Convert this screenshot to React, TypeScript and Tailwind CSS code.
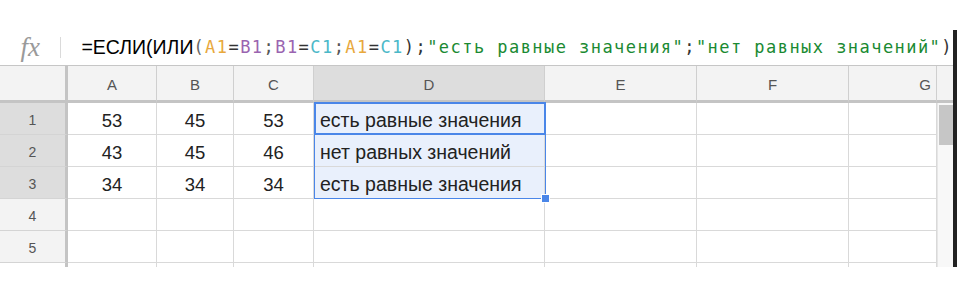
import React from "react";

const cols = [
  { k: "A", w: 89 },
  { k: "B", w: 77 },
  { k: "C", w: 80 },
  { k: "D", w: 231 },
  { k: "E", w: 152 },
  { k: "F", w: 152 },
  { k: "G", w: 88 },
];

const data: (string | number)[][] = [
  [53, 45, 53, "есть равные значения"],
  [43, 45, 46, "нет равных значений"],
  [34, 34, 34, "есть равные значения"],
  [],
  [],
];

const sans = { fontFamily: '"Liberation Sans", Arial, sans-serif' };
const mono = { fontFamily: '"DejaVu Sans Mono", monospace' };

export default function App() {
  return (
    <div className="w-[957px] h-[300px] bg-white flex overflow-hidden" style={sans}>
      <div className="w-[953px] flex flex-col">
        {/* formula bar */}
        <div className="h-[66px] flex items-start pt-[37px] border-b border-[#c6c6c6]">
          <div className="w-[68px] h-[21px] flex items-center justify-center border-r border-[#dadada]">
            <span
              className="text-[27px] italic text-[#9a9a9a] leading-none"
              style={{ fontFamily: '"Liberation Serif", serif' }}
            >
              fx
            </span>
          </div>
          <div className="pl-[20px] h-[21px] flex items-center whitespace-nowrap">
            <span className="text-[19.5px] text-black" style={sans}>=ЕСЛИ(ИЛИ</span>
            <span className="text-[17px] tracking-[1.45px]" style={mono}>
              <span className="text-[#666]">(</span>
              <span className="text-[#e8a83c]">A1</span>
              <span className="text-[#333]">=</span>
              <span className="text-[#9a64b0]">B1</span>
              <span className="text-[#555]">;</span>
              <span className="text-[#9a64b0]">B1</span>
              <span className="text-[#333]">=</span>
              <span className="text-[#4bb8c8]">C1</span>
              <span className="text-[#555]">;</span>
              <span className="text-[#e8a83c]">A1</span>
              <span className="text-[#333]">=</span>
              <span className="text-[#4bb8c8]">C1</span>
              <span className="text-[#333]">);</span>
              <span className="text-[#1a8a32]">"есть равные значения"</span>
              <span className="text-[#333]">;</span>
              <span className="text-[#1a8a32]">"нет равных значений"</span>
              <span className="text-[#333]">)</span>
            </span>
          </div>
        </div>

        {/* grid */}
        <div className="relative flex">
          <div className="flex flex-col">
            {/* header row */}
            <div className="flex h-[37px]">
              <div className="w-[68px] bg-[#f3f3f3] border-r-[3px] border-b-[3px] border-[#c4c4c4]" />
              {cols.map((c) => (
                <div
                  key={c.k}
                  style={{ width: c.w }}
                  className={
                    "border-r border-b-[3px] border-r-[#cfcfcf] border-b-[#c4c4c4] flex items-center pt-[4px] text-[15px] text-[#555] " +
                    (c.k === "D" ? "bg-[#dddddd] " : "bg-[#f3f3f3] ") +
                    (c.k === "G" ? "justify-end pr-[5px]" : "justify-center")
                  }
                >
                  {c.k}
                </div>
              ))}
            </div>
            {data.map((row, r) => (
              <div key={r} className="flex h-[32px]">
                <div
                  className={
                    "w-[68px] border-r-[3px] border-b border-r-[#c4c4c4] border-b-[#d4d4d4] flex items-center justify-center pt-[3px] text-[14px] text-[#555] " +
                    (r < 3 ? "bg-[#dddddd]" : "bg-[#f3f3f3]")
                  }
                >
                  {r + 1}
                </div>
                {cols.map((c, ci) => {
                  const v = row[ci];
                  const isD = ci === 3;
                  return (
                    <div
                      key={c.k}
                      style={{ width: c.w }}
                      className={
                        "border-r border-b border-[#d9d9d9] flex items-center pt-[4px] text-[#222] whitespace-nowrap " +
                        (isD ? "justify-start pl-[6px] text-[19.5px] " : "justify-center text-[18.5px] ") +
                        (isD && r < 3 ? "bg-[#e9f0fc]" : "bg-white")
                      }
                    >
                      {v ?? ""}
                    </div>
                  );
                })}
              </div>
            ))}
            <div className="flex h-[4px]">
              <div className="w-[68px] border-r-[3px] border-[#c4c4c4]" />
              {cols.map((c) => (
                <div key={c.k} style={{ width: c.w }} className="border-r border-[#d9d9d9]" />
              ))}
            </div>
          </div>
          {/* scrollbar */}
          <div className="w-[16px] flex flex-col">
            <div className="h-[37px] bg-[#f3f3f3] border-b-[3px] border-[#c4c4c4]" />
            <div className="h-[164px] bg-[#f8f8f8] border-l border-[#e6e6e6] pt-[2px] pl-[1px]">
              <div className="h-[40px] w-[14px] bg-[#c6c6c6]" />
            </div>
          </div>

          {/* selection overlay */}
          <div className="absolute left-[314px] top-[36px] w-[232px] h-[97px] border border-[#4a86e8] pointer-events-none" />
          <div className="absolute left-[314px] top-[36px] w-[232px] h-[33px] border-2 border-[#4a86e8] pointer-events-none" />
          <div className="absolute left-[541px] top-[128px] w-[9px] h-[9px] bg-[#4a86e8] border border-white" />
        </div>
      </div>
      <div className="w-[4px] h-[237px] mt-[30px] bg-[#222]" />
    </div>
  );
}
